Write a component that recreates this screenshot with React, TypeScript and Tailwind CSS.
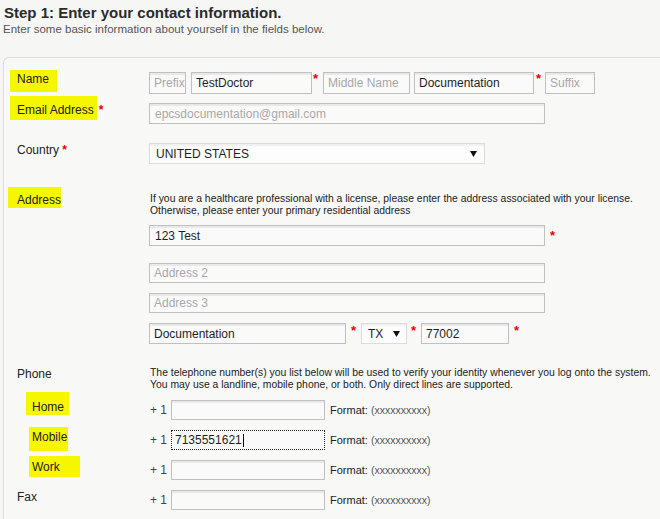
import React from "react";

const Star = ({ className = "" }: { className?: string }) => (
  <span className={`self-start text-[13px] font-bold leading-none text-[#e5000a] ${className}`}>*</span>
);

function Field({
  w,
  h = 21,
  value,
  placeholder,
  pad = "pl-[4px]",
}: {
  w: string;
  h?: number;
  value?: string;
  placeholder?: string;
  pad?: string;
}) {
  return (
    <div
      className={`${w} ${pad} flex shrink-0 items-center border border-[#c0c0c0] bg-[#fafafa] text-[12px] shadow-[inset_0_2px_1px_rgba(0,0,0,0.07)]`}
      style={{ height: h }}
    >
      {value ? (
        <span className="text-[#1e1e1e]">{value}</span>
      ) : (
        <span className="text-[#a8a8a8]">{placeholder}</span>
      )}
    </div>
  );
}

function Select({ w, value, pad = "pl-[6px]", arrow = "pr-[7px]" }: { w: string; value: string; pad?: string; arrow?: string }) {
  return (
    <div
      className={`${w} ${pad} ${arrow} flex h-[21px] shrink-0 items-center justify-between border border-[#dcdcdc] bg-[#fdfdfd] text-[12px] text-[#1e1e1e] shadow-[inset_0_2px_1px_rgba(0,0,0,0.05)]`}
    >
      <span>{value}</span>
      <svg width="7" height="6" viewBox="0 0 7 6">
        <path d="M0 0h7L3.5 6z" fill="#111" />
      </svg>
    </div>
  );
}

function Label({ children }: { children: React.ReactNode }) {
  return <div className="w-[132px] shrink-0 text-[12px] leading-[14px] text-[#222]">{children}</div>;
}

function PhoneRow({ label, hl, focused }: { label: React.ReactNode; hl?: string; focused?: boolean }) {
  return (
    <div className="mt-[10px] flex first:mt-[9px]">
      <Label>
        <span className={hl}>{label}</span>
      </Label>
      <div className="flex items-center">
        <span className="w-[22px] pl-px text-[12px] text-[#444]">+ 1</span>
        {focused ? (
          <div className="flex h-[20px] w-[154px] items-center border border-dotted border-[#222] bg-[#fafafa] pl-[3px] text-[12px] text-[#1e1e1e]">
            7135551621
            <span className="ml-px h-[13px] w-px bg-black" />
          </div>
        ) : (
          <Field w="w-[154px]" h={20} />
        )}
        <span className="ml-[5px] text-[11px] text-[#222]">
          Format: <span className="text-[10.5px] text-[#555]">(xxxxxxxxxx)</span>
        </span>
      </div>
    </div>
  );
}

export default function App() {
  return (
    <div className="h-[519px] w-[660px] overflow-hidden bg-[#f6f7f5] font-['Liberation_Sans',Arial,sans-serif]">
      <h1 className="pl-[4px] pt-[4px] text-[15px] font-bold leading-[18px] text-[#2b2b2b]">
        Step 1: Enter your contact information.
      </h1>
      <p className="pl-[3px] text-[11.5px] leading-[14px] text-[#555]">
        Enter some basic information about yourself in the fields below.
      </p>

      <div className="ml-[3px] mt-[21px] w-[700px] rounded-tl-[6px] border border-r-0 border-[#dcdcdc] bg-[#f8f9f7] pb-[40px] pl-[13px] pt-[14px]">
        {/* Name */}
        <div className="flex">
          <Label>
            <span className="-ml-[7px] bg-[#f6f600] pb-[6px] pl-[7px] pr-[8px] pt-[2px]">Name</span>
          </Label>
          <div className="flex">
            <Field w="w-[37px]" h={22} placeholder="Prefix" />
            <div className="ml-[5px] flex">
              <Field w="w-[121px]" h={22} value="TestDoctor" />
              <Star className="ml-px w-[10px]" />
            </div>
            <Field w="w-[87px]" h={22} placeholder="Middle Name" />
            <div className="ml-[4px] flex">
              <Field w="w-[120px]" h={22} value="Documentation" />
              <Star className="ml-[2px] w-[9px]" />
            </div>
            <Field w="w-[50px]" h={22} placeholder="Suffix" />
          </div>
        </div>

        {/* Email */}
        <div className="mt-[9px] flex">
          <Label>
            <span className="-ml-[7px] bg-[#f6f600] pb-[3px] pl-[7px] pr-[3px] pt-[7px]">Email Address</span>
            <span className="ml-[2px] font-bold text-[#e5000a]">*</span>
          </Label>
          <Field w="w-[396px]" placeholder="epcsdocumentation@gmail.com" pad="pl-[5px]" />
        </div>

        {/* Country */}
        <div className="mt-[19px] flex">
          <Label>
            Country <span className="font-bold text-[#e5000a]">*</span>
          </Label>
          <Select w="w-[336px]" value="UNITED STATES" />
        </div>

        {/* Address */}
        <div className="mt-[29px] flex">
          <Label>
            <span className="-ml-[9px] bg-[#f6f600] pb-px pl-[9px] pt-[6px]">Address</span>
          </Label>
          <div className="flex flex-col">
            <p className="pl-px text-[10.4px] leading-[12px] text-[#222]">
              If you are a healthcare professional with a license, please enter the address associated with your license.
              <br />
              Otherwise, please enter your primary residential address
            </p>
            <div className="mt-[8px] flex">
              <Field w="w-[396px]" value="123 Test" pad="pl-[5px]" />
              <Star className="ml-[5px] mt-[4px]" />
            </div>
            <div className="mt-[17px] flex">
              <Field w="w-[396px]" h={20} placeholder="Address 2" />
            </div>
            <div className="mt-[10px] flex">
              <Field w="w-[396px]" h={20} placeholder="Address 3" />
            </div>
            <div className="mt-[10px] flex">
              <Field w="w-[197px]" value="Documentation" />
              <Star className="ml-[5px] mt-[1px] w-[10px]" />
              <Select w="w-[46px]" value="TX" arrow="pr-[6px]" />
              <Star className="ml-[4px] mt-[1px] w-[10px]" />
              <Field w="w-[88px]" value="77002" />
              <Star className="ml-[5px] mt-[1px]" />
            </div>
          </div>
        </div>

        {/* Phone */}
        <div className="mt-[23px] flex">
          <Label>Phone</Label>
          <p className="pl-px text-[10.4px] leading-[12px] text-[#222]">
            The telephone number(s) you list below will be used to verify your identity whenever you log onto the system.
            <br />
            You may use a landline, mobile phone, or both. Only direct lines are supported.
          </p>
        </div>
        <div className="flex flex-col">
          <PhoneRow label="Home" hl="ml-[9px] bg-[#f6f600] pb-px pl-[6px] pr-[5px] pt-[8px]" />
          <PhoneRow label="Mobile" focused hl="ml-[12px] bg-[#f6f600] pb-[7px] pl-[3px] pr-px pt-[3px]" />
          <PhoneRow label="Work" hl="ml-[12px] bg-[#f6f600] pb-[3px] pl-[3px] pr-[20px] pt-[4px]" />
          <PhoneRow label="Fax" />
        </div>
      </div>
    </div>
  );
}
